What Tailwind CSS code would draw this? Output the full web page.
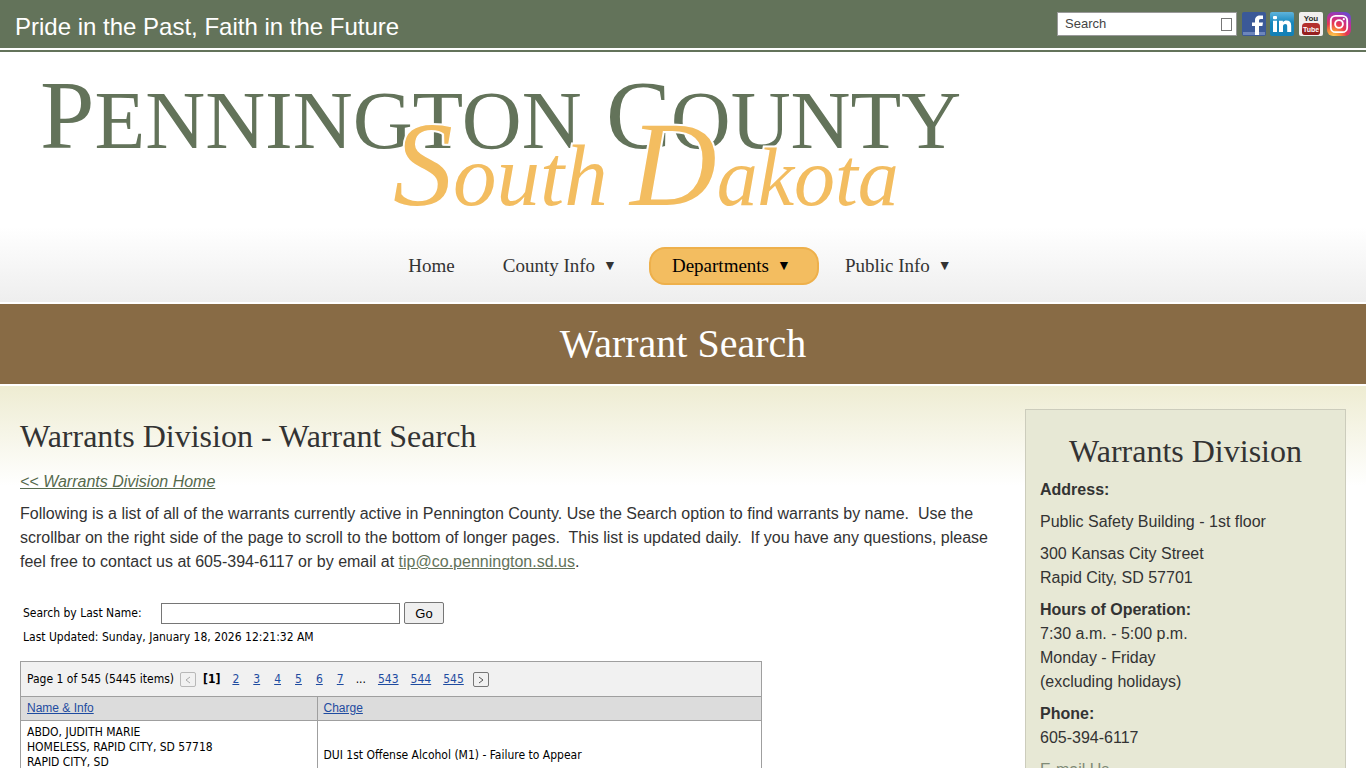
<!DOCTYPE html>
<html lang="en">
<head>
  <meta charset="UTF-8">
  <meta name="viewport" content="width=device-width, initial-scale=1.0">
  <title>Warrant Search - Pennington County, South Dakota</title>
  <script src="https://cdn.jsdelivr.net/npm/@tailwindcss/browser@4"></script>
</head>
<body class="bg-white text-base leading-6 text-[#333] font-['Liberation_Sans',Arial,sans-serif]">

  <!-- Top bar -->
  <div class="border-b-2 border-[#63735a]">
    <div class="flex h-[50px] items-start justify-between border-b-2 border-white bg-[#63735a] px-[15px] pt-3">
      <p class="text-2xl leading-[30px] text-white">Pride in the Past, Faith in the Future</p>
      <div class="flex items-center gap-1">
        <form class="mr-px flex h-6 w-[180px] items-center border border-[#999] bg-white pr-1 pl-[7px]">
          <input type="text" placeholder="Search" aria-label="Search" class="w-full min-w-0 text-[13px] text-[#444] outline-none placeholder:text-[#444]">
          <button type="submit" aria-label="Go" class="h-[13px] w-[11px] shrink-0 border border-[#777]"></button>
        </form>
        <a href="#" aria-label="Facebook">
          <svg class="size-6" viewBox="0 0 24 24">
            <rect width="24" height="24" rx="2" fill="#3b5998"/>
            <rect x="1" y="20" width="22" height="3" fill="#6d86bb"/>
            <path d="M13 23v-9h-3v-3.500h3V8.500C13 5 15 3.500 18 3.500h3V7h-2.200c-1.400 0-1.800.7-1.800 1.900v1.600h4l-.6 3.500H17v9z" fill="#fff"/>
          </svg>
        </a>
        <a href="#" aria-label="LinkedIn">
          <svg class="size-6" viewBox="0 0 24 24">
            <defs><linearGradient id="li" x1="0" y1="0" x2="0" y2="1"><stop offset="0" stop-color="#5fb4dc"/><stop offset=".45" stop-color="#1787bd"/><stop offset="1" stop-color="#1280b5"/></linearGradient></defs>
            <rect width="24" height="24" rx="2" fill="url(#li)"/>
            <rect x="3" y="4" width="4" height="3.200" rx="1" fill="#fff"/>
            <path d="M3 8.800h4V20H3zM9 8.800h3.900v1.400c.8-1.200 2-1.700 3.600-1.700 3 0 4.700 1.800 4.700 5V20h-4v-5.800c0-1.500-.6-2.300-1.900-2.300-1.500 0-2.300.9-2.300 2.500V20H9z" fill="#fff"/>
          </svg>
        </a>
        <a href="#" aria-label="YouTube" class="ml-px">
          <svg class="size-6" viewBox="0 0 24 24">
            <rect width="24" height="24" rx="2" fill="#f1efee"/>
            <rect x="3" y="11" width="18" height="12" rx="3.500" fill="#b3302d"/>
            <path d="M3 17h18v2.500a3.500 3.500 0 0 1-3.500 3.500h-11A3.500 3.500 0 0 1 3 19.500z" fill="#96201f"/>
            <text x="12" y="9" text-anchor="middle" font-family="Liberation Sans, Arial, sans-serif" font-size="8" font-weight="bold" fill="#2b2b2b">You</text>
            <text x="12" y="20" text-anchor="middle" font-family="Liberation Sans, Arial, sans-serif" font-size="7" font-weight="bold" fill="#fff">Tube</text>
          </svg>
        </a>
        <a href="#" aria-label="Instagram">
          <svg class="size-6" viewBox="0 0 24 24">
            <defs><radialGradient id="ig" cx=".25" cy="1.050" r="1.150"><stop offset="0" stop-color="#ffd65a"/><stop offset=".25" stop-color="#fb9537"/><stop offset=".5" stop-color="#e8374f"/><stop offset=".75" stop-color="#bf2f98"/><stop offset="1" stop-color="#6a4bd0"/></radialGradient></defs>
            <rect width="24" height="24" rx="6" fill="url(#ig)"/>
            <rect x="3.800" y="3.800" width="16.400" height="16.400" rx="4.800" fill="none" stroke="#fff" stroke-width="1.800"/>
            <circle cx="12" cy="12" r="3.900" fill="none" stroke="#fff" stroke-width="1.900"/>
            <circle cx="16.800" cy="7.200" r="1.100" fill="#fff"/>
          </svg>
        </a>
      </div>
    </div>
  </div>

  <!-- Logo and main menu -->
  <header class="bg-linear-to-b from-white from-70% to-[#eee]">
    <a href="#" class="block px-10 pt-[18px]">
      <svg class="h-auto w-full max-w-[920px]" viewBox="0 0 920 150" role="img" aria-label="Pennington County South Dakota">
        <g font-family="Liberation Serif, Times New Roman, serif" fill="#63735a">
          <text x="0" y="78" font-size="98">P<tspan font-size="83">ENNINGTON</tspan></text>
          <text x="566" y="78" font-size="97">C<tspan font-size="83">OUNTY</tspan></text>
        </g>
        <g font-family="Liberation Serif, Times New Roman, serif" font-style="italic" fill="#f3bd60" stroke="#fff" stroke-width="4" paint-order="stroke">
          <text x="353" y="135" font-size="120">S<tspan font-size="87">outh</tspan></text>
          <text x="590" y="135" font-size="120">D<tspan font-size="82">akota</tspan></text>
        </g>
      </svg>
    </a>
    <nav class="flex h-[82px] items-center justify-center pt-[10px] font-['Liberation_Serif',serif] text-[19px] leading-6">
      <a href="#" class="py-[5px] pr-6 pl-[22px]">Home</a>
      <a href="#" class="flex gap-2 py-[5px] pr-8 pl-6">County Info <span class="text-sm leading-6">▼</span></a>
      <a href="#" class="flex gap-2 rounded-2xl border-2 border-[#eeb04b] bg-[#f3bd60] py-[5px] pr-[26px] pl-[21px] text-black">Departments <span class="text-sm leading-6">▼</span></a>
      <a href="#" class="flex gap-2 py-[5px] pr-7 pl-[26px]">Public Info <span class="text-sm leading-6">▼</span></a>
    </nav>
  </header>

  <!-- Page title -->
  <div class="border-y-2 border-white bg-[#886b45] py-4 text-center">
    <h1 class="font-['Liberation_Serif',serif] text-[40px] leading-12 text-white">Warrant Search</h1>
  </div>

  <div class="flex items-start gap-5 bg-linear-to-b from-[#eeecd2] to-white to-[100px] px-5 pt-[23px]">
    <main class="flex-1 pt-2">
      <h2 class="font-['Liberation_Serif',serif] text-[32px] leading-[38px]">Warrants Division - Warrant Search</h2>
      <p class="mt-[15px]"><a href="#" class="text-[#566a4d] italic underline">&lt;&lt; Warrants Division Home</a></p>
      <p class="mt-2">Following is a list of all of the warrants currently active in Pennington County. Use the Search option to find warrants by name.&nbsp; Use the scrollbar on the right side of the page to scroll to the bottom of longer pages.&nbsp; This list is updated daily.&nbsp; If you have any questions, please feel free to contact us at 605-394-6117 or by email at <a href="mailto:tip@co.pennington.sd.us" class="text-[#63735a] underline">tip@co.pennington.sd.us</a>.</p>

      <div class="mt-7 font-['DejaVu_Sans_Condensed',Tahoma,sans-serif] text-xs leading-[15px] text-black">
        <form class="flex h-[22px] items-center pl-[3px]">
          <label for="lastName" class="w-[138px]">Search by Last Name:</label>
          <input id="lastName" type="text" class="h-[21px] w-[239px] border border-[#767676] bg-white px-1">
          <button type="button" class="ml-1 h-[22px] w-10 rounded-xs border border-[#767676] bg-[#efefef] font-['Liberation_Sans',sans-serif] text-[13px]">Go</button>
        </form>
        <p class="mt-[6px] pl-[3px]">Last Updated: Sunday, January 18, 2026 12:21:32 AM</p>

        <div class="mt-4 w-full max-w-[742px] border border-[#9f9f9f]">
          <!-- Pager -->
          <div class="flex h-[35px] items-center border-b border-[#9f9f9f] bg-[#f1f1f1] px-[6px] pt-px">
            <span class="mr-[6px]">Page 1 of 545 (5445 items)</span>
            <button type="button" disabled aria-label="Previous" class="mr-[7px] flex h-[15px] w-4 items-center justify-center rounded-xs border border-[#b8b8b8]">
              <svg class="size-2" viewBox="0 0 8 8" fill="none" stroke="#aaa"><path d="M6 1L2 4l4 3"/></svg>
            </button>
            <div class="flex gap-[14px] text-[#1e4ba0]">
              <b class="mr-[-2px] text-black">[1]</b>
              <a href="#" class="underline">2</a>
              <a href="#" class="underline">3</a>
              <a href="#" class="underline">4</a>
              <a href="#" class="underline">5</a>
              <a href="#" class="underline">6</a>
              <a href="#" class="underline">7</a>
            </div>
            <div class="ml-3 flex gap-3 text-[#1e4ba0]">
              <span class="text-black">...</span>
              <a href="#" class="underline">543</a>
              <a href="#" class="underline">544</a>
              <a href="#" class="underline">545</a>
            </div>
            <button type="button" aria-label="Next" class="ml-[9px] flex h-[15px] w-4 items-center justify-center rounded-xs border border-[#777]">
              <svg class="size-2" viewBox="0 0 8 8" fill="none" stroke="#555"><path d="M2 1l4 3-4 3"/></svg>
            </button>
          </div>
          <table class="w-full table-fixed">
            <thead>
              <tr class="border-b border-[#9f9f9f] bg-[#dcdcdc] text-left font-['Liberation_Sans',sans-serif]">
                <th class="w-[40%] border-r border-[#9f9f9f] px-[6px] py-1 font-normal"><a href="#" class="text-[#1e4ba0] underline">Name &amp; Info</a></th>
                <th class="px-[6px] py-1 font-normal"><a href="#" class="text-[#1e4ba0] underline">Charge</a></th>
              </tr>
            </thead>
            <tbody>
              <tr class="border-b border-[#9f9f9f]">
                <td class="border-r border-[#9f9f9f] px-[6px] py-1">ABDO, JUDITH MARIE<br>HOMELESS, RAPID CITY, SD 57718<br>RAPID CITY, SD<br>57718</td>
                <td class="px-[6px] py-1">DUI 1st Offense Alcohol (M1) - Failure to Appear</td>
              </tr>
            </tbody>
          </table>
        </div>
      </div>
    </main>

    <!-- Contact box -->
    <aside class="w-[321px] shrink-0 border border-[#ccccbc] bg-[#e7e8d5] px-[14px] pt-[22px] pb-5">
      <h2 class="mb-2 text-center font-['Liberation_Serif',serif] text-[32px] leading-[38px]">Warrants Division</h2>
      <div class="space-y-2">
        <p><b>Address:</b></p>
        <p>Public Safety Building - 1st floor</p>
        <p>300 Kansas City Street<br>Rapid City, SD 57701</p>
        <p><b>Hours of Operation:</b><br>7:30 a.m. - 5:00 p.m.<br>Monday - Friday<br>(excluding holidays)</p>
        <p><b>Phone:</b><br>605-394-6117</p>
        <p><a href="#" class="text-[#7f8a76] underline">E-mail Us</a></p>
      </div>
    </aside>
  </div>
</body>
</html>
